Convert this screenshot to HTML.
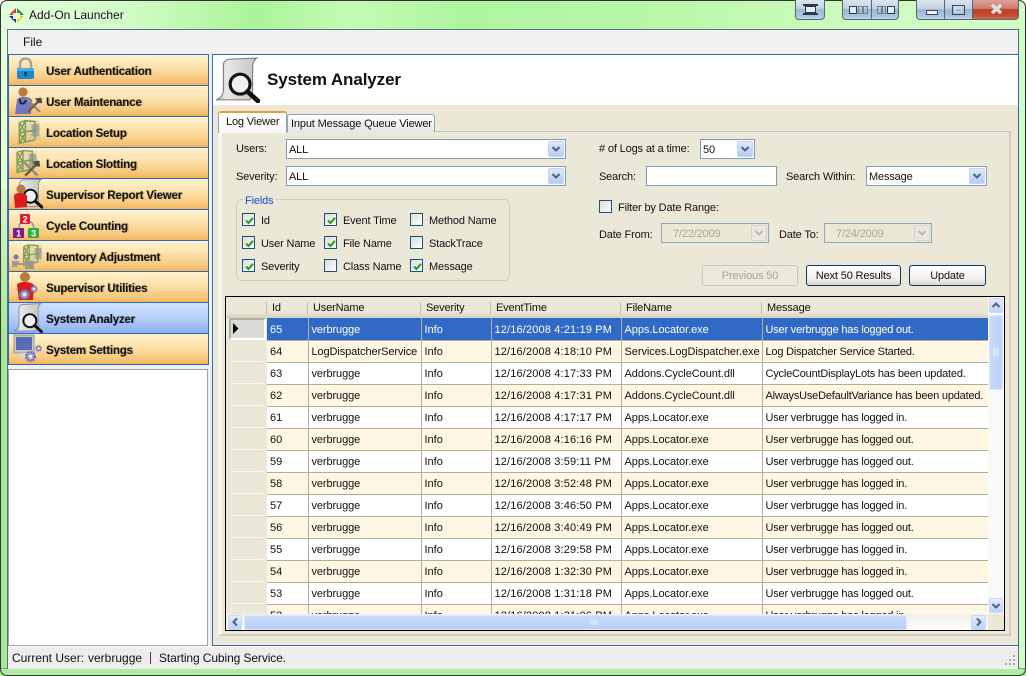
<!DOCTYPE html>
<html><head><meta charset="utf-8"><title>Add-On Launcher</title>
<style>
*{box-sizing:border-box}
html,body{margin:0;padding:0;background:#fff}
body{width:1026px;height:676px;overflow:hidden;position:relative;font:11px/14px "Liberation Sans",Arial,sans-serif;letter-spacing:-.15px;color:#111}
.a{position:absolute}
.t{position:absolute;white-space:nowrap;line-height:14px;height:14px;margin-top:1px}
#win{left:0;top:0;width:1026px;height:676px;border-radius:7px;background:linear-gradient(90deg,#e2ffdb 0,#d2fcc7 12%,#aaf498 25%,#c4fbb4 34%,#aef59f 45%,#b6f7a6 62%,#cffcc0 85%,#d0fdc4 100%);overflow:hidden}
#lb{left:0;top:190px;width:7px;height:485px;background:linear-gradient(#d5f5d0,#a6ea98 30%,#a6ea98)}
#bb{left:0;top:668px;width:1026px;height:8px;background:#aeec9f;border-top:1px solid #8a9a8a}
#client{left:7px;top:29px;width:1012px;height:640px;background:#f0f0f0;border:1px solid #5a6d8f;border-bottom:none}
.cap{position:absolute;top:0;height:20px;border:1px solid #55657a;border-top:none;background:linear-gradient(#dbe4ee 0,#c2d2e2 45%,#9cb8d2 50%,#a9c4dc 85%,#c6d8e8 100%)}
.cap svg{position:absolute;left:0;top:0}
.nav{position:absolute;left:9px;width:199px;height:30px;background:linear-gradient(#fff2cf 0,#fde0a8 45%,#f6c678 85%,#f3b55a 100%);font-weight:bold;font-size:11.5px}
.nav.s{background:linear-gradient(#cfe2ff 0,#b5cffa 50%,#8aaff2 100%)}
.nav span{position:absolute;left:37px;top:10px;line-height:14px;white-space:nowrap;text-shadow:1px 0 1px rgba(0,0,0,.28);letter-spacing:-.18px}
.nav svg{position:absolute;left:2px;top:-1px}
.line{position:absolute;background:#2e6ab8}
.combo{position:absolute;background:#fff;border:1px solid #7f9db9;padding:3px 0 0 2px;line-height:14px;height:20px}
.combo.d{background:#ebe8d8;color:#aca899;border-color:#8ba6c4;padding-left:11px}
.dd{position:absolute;right:1px;top:1px;width:16px;height:16px;border-radius:2px;background:linear-gradient(#dfe8fb,#b6cbf4);border:1px solid #c4d4f4}
.combo.d .dd{background:#ebe9df;border-color:#d5d3c8}
.chk{position:absolute;width:13px;height:13px;border:1px solid #1c5180;background:linear-gradient(135deg,#dcdcd6,#fff)}
.chk svg{position:absolute;left:1px;top:1px}
.btn{position:absolute;height:21px;border:1px solid #003c74;border-radius:3px;background:linear-gradient(#fff,#f2f1e9 70%,#d9d7c9);text-align:center;line-height:19px;padding-top:1px}
.btn.off{border-color:#c9c7ba;color:#a8a597;background:#ece9df}
#tbl{position:absolute;left:1px;top:21px;border-collapse:collapse;table-layout:fixed;width:722px;font-size:11px}
#tbl td{height:22px;padding:2px 0 0 3px;border:1px solid #b5ad98;border-top:none;border-left:none;white-space:nowrap;overflow:hidden;background:#fff}
#tbl td:nth-child(1){letter-spacing:0}
#tbl td:nth-child(2){letter-spacing:-.1px}
#tbl td:nth-child(3){letter-spacing:0}
#tbl td:nth-child(4){letter-spacing:.15px}
#tbl td:nth-child(5){letter-spacing:-.05px}
#tbl td:nth-child(6){letter-spacing:-.2px}
#tbl tr:nth-child(even) td{background:#fdf7e3}
#tbl tr.sel td{background:#3169c6;color:#fff}
.rh{position:absolute;left:5px;width:32px;height:1px;background:#fbfaf4}
.hd{position:absolute;top:4px;white-space:nowrap}
.sep{position:absolute;top:5px;width:1px;height:12px;background:#c3bfa9}
</style></head><body>
<svg width="0" height="0" style="position:absolute">
<defs>
<linearGradient id="sg" x1="0" x2="1" y1="0" y2="0"><stop offset="0" stop-color="#b8b8b8"/><stop offset=".25" stop-color="#e8e8e8"/><stop offset="1" stop-color="#c4c4c4"/></linearGradient>
<symbol id="scroll" viewBox="0 0 44 44">
<path d="M1 41 C6 39 8 36 8 31 L8 8 C8 4 11 2 15 2 L40 1 C37 3 36 6 36 10 L36 32 C36 37 35 39 33 41 Z" fill="url(#sg)" stroke="#777"/>
<circle cx="24" cy="26" r="9.5" fill="#eef0f2" stroke="#111" stroke-width="3"/>
<path d="M20 21a6 6 0 0 1 8-1" fill="none" stroke="#fff" stroke-width="2"/>
<path d="M31 33 L41 42" stroke="#111" stroke-width="4.5" stroke-linecap="round"/>
</symbol>
<symbol id="rack" viewBox="0 0 32 32">
<path d="M6 5 L29 3 L29 25 L6 30 Z" fill="#b8c49a" opacity=".35"/>
<path d="M20 7h9v14h-9z" fill="#a8a8a0"/>
<path d="M6 5V30M13 3V27M24 3V24M6 5L13 3 24 4M6 17L24 14M6 29L24 25M6 5L13 17 6 29M13 3L6 17 13 27" fill="none" stroke="#7f9a52" stroke-width="1.6"/>
</symbol>
<symbol id="tools" viewBox="0 0 24 24">
<path d="M4 4 L20 20" stroke="#8c8c84" stroke-width="3"/>
<path d="M20 5 L5 20" stroke="#6e5f48" stroke-width="3"/>
<path d="M14 3 L22 2 L23 9 L18 9 Z" fill="#4d4d4d"/>
</symbol>
<symbol id="gear" viewBox="0 0 20 20">
<circle cx="10" cy="10" r="6" fill="#9a98d8" stroke="#6f6db0" stroke-width="3" stroke-dasharray="2.4 1.6"/>
<circle cx="10" cy="10" r="2.5" fill="#eee"/>
</symbol>
<symbol id="dn" viewBox="0 0 14 14"><path d="M3.5 5 L7 8.5 L10.5 5" fill="none" stroke="#4d6185" stroke-width="2"/></symbol>
<symbol id="ck" viewBox="0 0 11 11"><path d="M2 5.5 L4.5 8 L9 2.8" fill="none" stroke="#21a121" stroke-width="2"/></symbol>
</defs></svg>

<div class="a" id="win"></div>
<div class="a" id="lb"></div>
<div class="a" id="bb"></div>
<div class="a" style="left:0;top:0;width:1026px;height:676px;border:1px solid #333;border-radius:7px;pointer-events:none"></div>

<svg class="a" style="left:8px;top:7px" width="17" height="17" viewBox="0 0 17 17">
<path d="M8 1 L1 8 L5 8 L5 6 L8 6Z" fill="#e03020"/><path d="M9 1 L16 8 L12 8 L12 6 L9 6Z" fill="#159a35"/>
<path d="M1 9 L8 16 L8 12 L5 12 L5 9Z" fill="#2030b8"/><path d="M16 9 L9 16 L9 12 L12 12 L12 9Z" fill="#e8d020"/></svg>
<div class="t" style="left:29px;top:8px;margin-top:0;color:#111;font-size:12px;letter-spacing:0;text-shadow:0 0 6px #fff">Add-On Launcher</div>

<div class="cap" style="left:795px;width:30px;border-radius:0 0 4px 4px"><svg width="30" height="20"><path d="M7 4h15v2h-15zM7 13h15v2h-15z" fill="#2c3a4c"/><path d="M9.5 6.5h10v6h-10z" fill="#e8eef5" stroke="#2c3a4c"/></svg></div>
<div class="cap" style="left:842px;width:29px;border-radius:0 0 0 4px;border-right:none"><svg width="29" height="20"><rect x="6.5" y="6.5" width="7" height="7" fill="#e6ecf3" stroke="#2c3a4c"/><path d="M15.5 6.5h4v7h-4zM20.5 6.5h4v7h-4z" fill="none" stroke="#6f8092"/></svg></div>
<div class="cap" style="left:871px;width:28px;border-radius:0 0 4px 0"><svg width="28" height="20"><path d="M5.5 6.5h4v7h-4zM10.5 6.5h3v7h-3z" fill="none" stroke="#6f8092"/><rect x="15.5" y="6.5" width="7" height="7" fill="#e6ecf3" stroke="#2c3a4c"/></svg></div>
<div class="cap" style="left:916px;width:28px;border-radius:0 0 0 4px;border-right:none"><svg width="28" height="20"><rect x="9.5" y="10.5" width="11" height="4" fill="#f2f4f7" stroke="#3a4757"/></svg></div>
<div class="cap" style="left:944px;width:28px;border-right:none"><svg width="28" height="20"><rect x="7.5" y="5.5" width="12" height="9" fill="none" stroke="#3a4757"/><rect x="10" y="8" width="7" height="4" fill="none" stroke="#dfe6ee"/></svg></div>
<div class="cap" style="left:972px;width:47px;border-radius:0 0 4px 0;background:linear-gradient(#dba598 0,#cc7d6c 45%,#b84028 50%,#c8462c 80%,#d76f55 100%)"><svg width="47" height="20"><path d="M19 5 L28 13 M28 5 L19 13" stroke="#eef0f0" stroke-width="3.2"/><path d="M19 5 L28 13 M28 5 L19 13" stroke="#d8d8d8" stroke-width="1.4"/></svg></div>

<div class="a" id="client"></div>
<div class="t" style="left:23px;top:35px;margin-top:0;color:#111;font-size:12px;letter-spacing:0">File</div>

<!-- left navigation -->
<div class="line" style="left:8px;top:54px;width:201px;height:1px"></div>
<div class="line" style="left:8px;top:54px;width:1px;height:311px"></div>
<div class="line" style="left:208px;top:54px;width:1px;height:311px"></div>

<div class="nav" style="top:55px"><svg width="32" height="32" viewBox="0 0 32 32"><path d="M9 15V10a5.500 5.500 0 0 1 11 0v5" fill="none" stroke="#a5a5a0" stroke-width="2.6"/><rect x="6" y="14" width="17" height="11" rx="2" fill="#1e88c8"/><rect x="6" y="14" width="17" height="3" fill="#4aaee0"/><rect x="13.500" y="18" width="2" height="4" fill="#123"/></svg><span>User Authentication</span></div>
<div class="line" style="left:9px;top:85px;width:199px;height:1px"></div>
<div class="nav" style="top:86px"><svg width="32" height="32" viewBox="0 0 32 32"><path d="M4 29 L6 14 C9 11 19 11 21 15 L20 29Z" fill="#7278c0"/><circle cx="12" cy="7" r="4.6" fill="#b77b3c"/><path d="M9 14 C8 20 14 20 15 15" fill="none" stroke="#223" stroke-width="2"/><use href="#tools" x="13" y="11" width="19" height="19"/></svg><span>User Maintenance</span></div>
<div class="line" style="left:9px;top:116px;width:199px;height:1px"></div>
<div class="nav" style="top:117px"><svg width="32" height="32" viewBox="0 0 32 32"><use href="#rack" x="3" y="1" width="28" height="30"/></svg><span>Location Setup</span></div>
<div class="line" style="left:9px;top:147px;width:199px;height:1px"></div>
<div class="nav" style="top:148px"><svg width="32" height="32" viewBox="0 0 32 32"><use href="#rack" x="1" y="0" width="27" height="29"/><use href="#tools" x="10" y="12" width="20" height="20"/></svg><span>Location Slotting</span></div>
<div class="line" style="left:9px;top:178px;width:199px;height:1px"></div>
<div class="nav" style="top:179px"><svg width="32" height="32" viewBox="0 0 32 32"><use href="#scroll" x="3" y="0" width="30" height="31"/><circle cx="10" cy="11" r="4.500" fill="#b77b3c"/><path d="M3 18 C3 14 15 14 16 18 L16 29 L4 30Z" fill="#dc1c1c"/></svg><span>Supervisor Report Viewer</span></div>
<div class="line" style="left:9px;top:209px;width:199px;height:1px"></div>
<div class="nav" style="top:210px"><svg width="32" height="32" viewBox="0 0 32 32"><path d="M8 19 C8 9 22 9 23 19" fill="none" stroke="#999" stroke-width="1.6"/><rect x="9" y="5" width="10" height="10" rx="1" fill="#dc1c30"/><rect x="2" y="19" width="11" height="10" rx="1" fill="#7c1c96"/><rect x="17" y="19" width="11" height="10" rx="1" fill="#2cb038"/><text x="14" y="13.500" font-size="9" font-weight="bold" fill="#fff" text-anchor="middle" font-family="Liberation Sans">2</text><text x="7.500" y="27.500" font-size="9" font-weight="bold" fill="#fff" text-anchor="middle" font-family="Liberation Sans">1</text><text x="22.500" y="27.500" font-size="9" font-weight="bold" fill="#fff" text-anchor="middle" font-family="Liberation Sans">3</text></svg><span>Cycle Counting</span></div>
<div class="line" style="left:9px;top:240px;width:199px;height:1px"></div>
<div class="nav" style="top:241px"><svg width="32" height="32" viewBox="0 0 32 32"><use href="#rack" x="8" y="0" width="25" height="30"/><circle cx="5" cy="17" r="2.500" fill="#7278c0"/><path d="M1 27V21h7v2h7v-2h8v8h-9v-4H6v2z" fill="#9a9a90"/></svg><span>Inventory Adjustment</span></div>
<div class="line" style="left:9px;top:271px;width:199px;height:1px"></div>
<div class="nav" style="top:272px"><svg width="32" height="32" viewBox="0 0 32 32"><circle cx="14" cy="6" r="5" fill="#b77b3c"/><path d="M6 14 C7 10 20 10 23 14 L22 29 L8 29Z" fill="#dc1c1c"/><use href="#gear" x="6" y="16" width="15" height="15"/><use href="#gear" x="18" y="13" width="10" height="10"/></svg><span>Supervisor Utilities</span></div>
<div class="line" style="left:9px;top:302px;width:199px;height:1px"></div>
<div class="nav s" style="top:303px"><svg width="36" height="32" viewBox="0 0 36 32"><use href="#scroll" x="2" y="1" width="31" height="30"/></svg><span>System Analyzer</span></div>
<div class="line" style="left:9px;top:333px;width:199px;height:1px"></div>
<div class="nav" style="top:334px"><svg width="32" height="32" viewBox="0 0 32 32"><rect x="3" y="2" width="20" height="18" fill="#c8c8c0" stroke="#999"/><rect x="5" y="4" width="16" height="13" fill="#5a6cb8"/><path d="M10 20h8l3 5H7z" fill="#d8d8d0"/><use href="#gear" x="12" y="16" width="15" height="15"/><use href="#gear" x="23" y="11" width="9" height="9"/></svg><span>System Settings</span></div>
<div class="line" style="left:8px;top:364px;width:201px;height:1px"></div>
<div class="a" style="left:8px;top:369px;width:200px;height:277px;background:#fff;border:1px solid #9aa3ad"></div>

<!-- right panel -->
<div class="a" style="left:212px;top:54px;width:807px;height:592px;background:#ebe8d8;border:1px solid #2e6ab8"></div>
<div class="a" style="left:213px;top:55px;width:805px;height:50px;background:#fff"></div>
<svg class="a" style="left:215px;top:57px" width="46" height="46"><use href="#scroll" x="0" y="0" width="46" height="46"/></svg>
<div class="t" style="left:267px;top:70px;margin-top:0;height:20px;line-height:20px;font-size:17px;font-weight:bold;letter-spacing:-.1px;color:#111">System Analyzer</div>

<!-- tabs -->
<div class="a" style="left:218px;top:131px;width:793px;height:505px;border-top:1px solid #c6c8c4;border-left:4px solid #f6f4ec;border-right:2px solid #cfccbc;border-bottom:2px solid #cfccbc"></div>
<div class="a" style="left:287px;top:114px;width:148px;height:18px;border:1px solid #8fa3ad;border-bottom:none;border-radius:3px 3px 0 0;background:linear-gradient(#fff,#f0f0f2 60%,#e4e5ea)"></div>
<div class="t" style="left:291px;top:116px">Input Message Queue Viewer</div>
<div class="a" style="left:218px;top:111px;width:69px;height:22px;border:1px solid #8fa3ad;border-top:2px solid #e8a030;border-bottom:none;border-radius:3px 3px 0 0;background:linear-gradient(#fff,#f8f8fa)"></div>
<div class="t" style="left:226px;top:114px">Log Viewer</div>

<!-- filters left -->
<div class="t" style="left:236px;top:141px">Users:</div>
<div class="combo" style="left:286px;top:139px;width:280px">ALL<div class="dd"><svg width="14" height="14"><use href="#dn"/></svg></div></div>
<div class="t" style="left:236px;top:169px">Severity:</div>
<div class="combo" style="left:286px;top:166px;width:280px">ALL<div class="dd"><svg width="14" height="14"><use href="#dn"/></svg></div></div>

<div class="a" style="left:236px;top:199px;width:274px;height:82px;border:1px solid #d0cdbc;border-radius:5px"></div>
<div class="t" style="left:243px;top:193px;padding:0 2px;background:#ebe8d8;color:#1c50c8">Fields</div>

<div class="chk" style="left:242px;top:213px"><svg width="11" height="11"><use href="#ck"/></svg></div><div class="t" style="left:261px;top:213px">Id</div>
<div class="chk" style="left:242px;top:236px"><svg width="11" height="11"><use href="#ck"/></svg></div><div class="t" style="left:261px;top:236px">User Name</div>
<div class="chk" style="left:242px;top:259px"><svg width="11" height="11"><use href="#ck"/></svg></div><div class="t" style="left:261px;top:259px">Severity</div>
<div class="chk" style="left:324px;top:213px"><svg width="11" height="11"><use href="#ck"/></svg></div><div class="t" style="left:343px;top:213px">Event Time</div>
<div class="chk" style="left:324px;top:236px"><svg width="11" height="11"><use href="#ck"/></svg></div><div class="t" style="left:343px;top:236px">File Name</div>
<div class="chk" style="left:324px;top:259px"></div><div class="t" style="left:343px;top:259px">Class Name</div>
<div class="chk" style="left:410px;top:213px"></div><div class="t" style="left:429px;top:213px">Method Name</div>
<div class="chk" style="left:410px;top:236px"></div><div class="t" style="left:429px;top:236px">StackTrace</div>
<div class="chk" style="left:410px;top:259px"><svg width="11" height="11"><use href="#ck"/></svg></div><div class="t" style="left:429px;top:259px">Message</div>

<!-- filters right -->
<div class="t" style="left:599px;top:141px"># of Logs at a time:</div>
<div class="combo" style="left:700px;top:139px;width:55px">50<div class="dd"><svg width="14" height="14"><use href="#dn"/></svg></div></div>
<div class="t" style="left:599px;top:169px">Search:</div>
<div class="a" style="left:646px;top:166px;width:131px;height:20px;background:#fff;border:1px solid #7f9db9"></div>
<div class="t" style="left:786px;top:169px">Search Within:</div>
<div class="combo" style="left:866px;top:166px;width:121px">Message<div class="dd"><svg width="14" height="14"><use href="#dn"/></svg></div></div>
<div class="chk" style="left:599px;top:200px"></div><div class="t" style="left:618px;top:200px">Filter by Date Range:</div>
<div class="t" style="left:599px;top:227px">Date From:</div>
<div class="combo d" style="left:661px;top:223px;width:108px">7/22/2009<div class="dd"><svg width="14" height="14"><use href="#dn" opacity=".35"/></svg></div></div>
<div class="t" style="left:779px;top:227px">Date To:</div>
<div class="combo d" style="left:824px;top:223px;width:108px">7/24/2009<div class="dd"><svg width="14" height="14"><use href="#dn" opacity=".35"/></svg></div></div>
<div class="btn off" style="left:702px;top:265px;width:96px">Previous 50</div>
<div class="btn" style="left:806px;top:265px;width:95px">Next 50 Results</div>
<div class="btn" style="left:909px;top:265px;width:77px">Update</div>

<!-- grid -->
<div class="a" style="left:225px;top:296px;width:780px;height:335px;border:1px solid #000;background:#ebe8d8;overflow:hidden" id="grid">
 <div class="a" style="left:0;top:0;width:762px;height:21px;background:linear-gradient(#ebe8d8 70%,#dedac8 90%,#d2cfbd)"></div>
 <div class="sep" style="left:40px"></div><div class="hd" style="left:46px">Id</div>
 <div class="sep" style="left:81px"></div><div class="hd" style="left:87px">UserName</div>
 <div class="sep" style="left:194px"></div><div class="hd" style="left:200px">Severity</div>
 <div class="sep" style="left:264px"></div><div class="hd" style="left:270px">EventTime</div>
 <div class="sep" style="left:394px"></div><div class="hd" style="left:400px">FileName</div>
 <div class="sep" style="left:535px"></div><div class="hd" style="left:541px">Message</div>

 <div class="a" style="left:3px;top:21px;width:37px;height:22px;background:#dcdcd6;border:2px solid;border-color:#b0ae9f #fff #fff #b0ae9f"></div>
 <svg class="a" style="left:6px;top:26px" width="8" height="11"><path d="M1 0 L6.5 5.5 L1 11Z" fill="#000"/></svg>
 <div class="rh" style="top:64px"></div><div class="rh" style="top:86px"></div><div class="rh" style="top:108px"></div><div class="rh" style="top:130px"></div><div class="rh" style="top:152px"></div><div class="rh" style="top:174px"></div><div class="rh" style="top:196px"></div><div class="rh" style="top:218px"></div><div class="rh" style="top:240px"></div><div class="rh" style="top:262px"></div><div class="rh" style="top:284px"></div><div class="rh" style="top:306px"></div>

 <div class="a" style="left:40px;top:0;width:722px;height:317px;overflow:hidden">
 <table id="tbl">
 <colgroup><col style="width:41px"><col style="width:113px"><col style="width:70px"><col style="width:130px"><col style="width:141px"><col style="width:227px"></colgroup>
 <tr class="sel"><td>65</td><td>verbrugge</td><td>Info</td><td>12/16/2008 4:21:19 PM</td><td>Apps.Locator.exe</td><td>User verbrugge has logged out.</td></tr>
 <tr><td>64</td><td>LogDispatcherService</td><td>Info</td><td>12/16/2008 4:18:10 PM</td><td>Services.LogDispatcher.exe</td><td>Log Dispatcher Service Started.</td></tr>
 <tr><td>63</td><td>verbrugge</td><td>Info</td><td>12/16/2008 4:17:33 PM</td><td>Addons.CycleCount.dll</td><td>CycleCountDisplayLots has been updated.</td></tr>
 <tr><td>62</td><td>verbrugge</td><td>Info</td><td>12/16/2008 4:17:31 PM</td><td>Addons.CycleCount.dll</td><td>AlwaysUseDefaultVariance has been updated.</td></tr>
 <tr><td>61</td><td>verbrugge</td><td>Info</td><td>12/16/2008 4:17:17 PM</td><td>Apps.Locator.exe</td><td>User verbrugge has logged in.</td></tr>
 <tr><td>60</td><td>verbrugge</td><td>Info</td><td>12/16/2008 4:16:16 PM</td><td>Apps.Locator.exe</td><td>User verbrugge has logged out.</td></tr>
 <tr><td>59</td><td>verbrugge</td><td>Info</td><td>12/16/2008 3:59:11 PM</td><td>Apps.Locator.exe</td><td>User verbrugge has logged out.</td></tr>
 <tr><td>58</td><td>verbrugge</td><td>Info</td><td>12/16/2008 3:52:48 PM</td><td>Apps.Locator.exe</td><td>User verbrugge has logged in.</td></tr>
 <tr><td>57</td><td>verbrugge</td><td>Info</td><td>12/16/2008 3:46:50 PM</td><td>Apps.Locator.exe</td><td>User verbrugge has logged in.</td></tr>
 <tr><td>56</td><td>verbrugge</td><td>Info</td><td>12/16/2008 3:40:49 PM</td><td>Apps.Locator.exe</td><td>User verbrugge has logged out.</td></tr>
 <tr><td>55</td><td>verbrugge</td><td>Info</td><td>12/16/2008 3:29:58 PM</td><td>Apps.Locator.exe</td><td>User verbrugge has logged in.</td></tr>
 <tr><td>54</td><td>verbrugge</td><td>Info</td><td>12/16/2008 1:32:30 PM</td><td>Apps.Locator.exe</td><td>User verbrugge has logged in.</td></tr>
 <tr><td>53</td><td>verbrugge</td><td>Info</td><td>12/16/2008 1:31:18 PM</td><td>Apps.Locator.exe</td><td>User verbrugge has logged out.</td></tr>
 <tr><td>52</td><td>verbrugge</td><td>Info</td><td>12/16/2008 1:31:06 PM</td><td>Apps.Locator.exe</td><td>User verbrugge has logged in.</td></tr>
 </table>
 </div>

 <!-- v scroll -->
 <div class="a" style="left:762px;top:0;width:16px;height:317px;background:#f9f9f5"></div>
 <div class="a" style="left:763px;top:1px;width:14px;height:15px;background:linear-gradient(#e4ecfd,#bfd2f8);border:1px solid #c8d8f8;border-radius:2px"><svg width="12" height="13" style="display:block"><path d="M2.5 8 L6 4.5 L9.5 8" fill="none" stroke="#4d6185" stroke-width="2"/></svg></div>
 <div class="a" style="left:763px;top:18px;width:14px;height:75px;background:linear-gradient(90deg,#c9daf9,#bed1f8);border:1px solid #dfe8fb;border-radius:2px"><svg width="12" height="73" style="display:block"><path d="M3 33h6M3 35h6M3 37h6M3 39h6" stroke="#eef3fd" stroke-width="1"/></svg></div>
 <div class="a" style="left:763px;top:301px;width:14px;height:15px;background:linear-gradient(#e4ecfd,#bfd2f8);border:1px solid #c8d8f8;border-radius:2px"><svg width="12" height="13" style="display:block"><path d="M2.5 5 L6 8.5 L9.5 5" fill="none" stroke="#4d6185" stroke-width="2"/></svg></div>
 <!-- h scroll -->
 <div class="a" style="left:0;top:317px;width:762px;height:16px;background:linear-gradient(#f2f1ea,#fdfdfb)"></div>
 <div class="a" style="left:2px;top:318px;width:14px;height:15px;background:linear-gradient(#e4ecfd,#bfd2f8);border:1px solid #c8d8f8;border-radius:2px"><svg width="12" height="13" style="display:block"><path d="M8 2.5 L4.5 6 L8 9.5" fill="none" stroke="#4d6185" stroke-width="2"/></svg></div>
 <div class="a" style="left:18px;top:318px;width:663px;height:15px;background:linear-gradient(#cadbfa,#b9cef7);border:1px solid #dfe8fb;border-radius:2px"><svg width="661" height="13" style="display:block"><path d="M346 4v5M348 4v5M350 4v5M352 4v5" stroke="#eef3fd"/></svg></div>
 <div class="a" style="left:745px;top:318px;width:15px;height:15px;background:linear-gradient(#e4ecfd,#bfd2f8);border:1px solid #c8d8f8;border-radius:2px"><svg width="13" height="13" style="display:block"><path d="M5 2.5 L8.5 6 L5 9.5" fill="none" stroke="#4d6185" stroke-width="2"/></svg></div>
</div>

<!-- status -->
<div class="a" style="left:8px;top:646px;width:1010px;height:22px;background:#efedeb;border-top:1px solid #fff"></div>
<div class="t" style="left:12px;top:651px;margin-top:0;font-size:12px;letter-spacing:0">Current User:</div>
<div class="t" style="left:88px;top:651px;margin-top:0;font-size:12px;letter-spacing:0">verbrugge</div>
<div class="a" style="left:150px;top:652px;width:1px;height:12px;background:#5a2a8a"></div>
<div class="t" style="left:159px;top:651px;margin-top:0;font-size:12px;letter-spacing:-.1px">Starting Cubing Service.</div>
<svg class="a" style="left:1004px;top:654px" width="13" height="13"><path d="M9 1h2v2H9zM5 5h2v2H5zM9 5h2v2H9zM1 9h2v2H1zM5 9h2v2H5zM9 9h2v2H9z" fill="#a9a8a3"/></svg>
</body></html>
